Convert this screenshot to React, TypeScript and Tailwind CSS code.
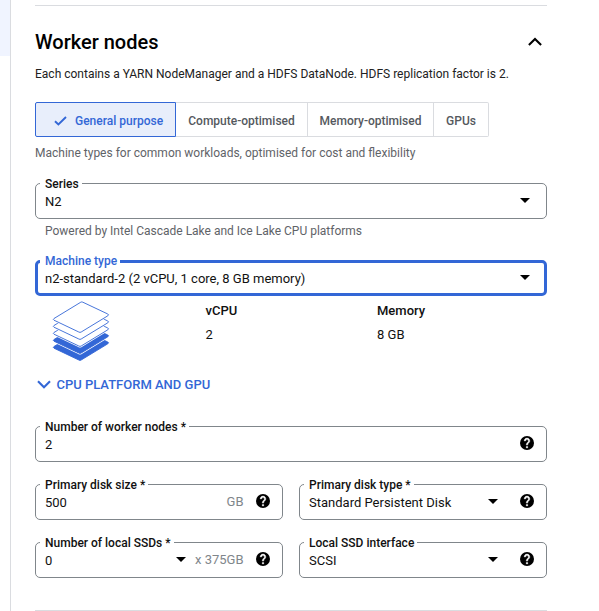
import type { ReactNode } from "react";

function HelpIcon() {
  return (
    <svg viewBox="2 2 20 20" className="mb-[2px] block h-[14px] w-[14px] shrink-0">
      <circle cx="12" cy="12" r="10" fill="#000" />
      <path
        d="M13 19h-2v-2h2v2zm2.07-7.75l-.9.92C13.45 12.9 13 13.5 13 15h-2v-.5c0-1.1.45-2.1 1.17-2.83l1.24-1.26c.37-.36.59-.86.59-1.41 0-1.1-.9-2-2-2s-2 .9-2 2H8c0-2.21 1.79-4 4-4s4 1.79 4 4c0 .88-.36 1.68-.93 2.25z"
        fill="#fff"
        stroke="#fff"
        strokeWidth="0.6"
      />
    </svg>
  );
}

function Caret() {
  return (
    <svg viewBox="0 0 10 5" className="mb-px block h-[5px] w-[10px] shrink-0" fill="#000">
      <path d="M0 0h10L5 5z" />
    </svg>
  );
}

function Field({
  label,
  value,
  focused = false,
  children,
}: {
  label: string;
  value: string;
  focused?: boolean;
  children?: ReactNode;
}) {
  return (
    <div
      className={
        "relative flex h-9 w-full items-center rounded-[5px] " +
        (focused ? "border-[3px] border-[#3367d6] pr-[13px] pl-[7px]" : "border border-[#80868b] pr-[12px] pl-[9px]")
      }
    >
      <span
        className={
          "absolute bg-white pr-[3px] pl-[5px] text-[12px] leading-4 font-medium whitespace-nowrap " +
          (focused ? "-top-[10px] left-[2px] text-[#3367d6]" : "-top-[8px] left-[4px] text-[#111]")
        }
      >
        {label}
      </span>
      <span className="flex-1 pt-[2px] text-[13px] leading-4 text-[#111]">{value}</span>
      {children}
    </div>
  );
}

const layer = "M30.8 1.8Q31.8 1.2 32.8 1.8L57.8 13.6Q59.3 14.4 57.8 15.4L31.2 31.6Q30 32.4 28.8 31.6L4 19.8Q2.6 19 4 18.1Z";

function StackIcon() {
  return (
    <svg viewBox="0 -0.4 62 62" className="block h-[62px] w-[62px]">
      {[28, 21, 14, 7, 0].map((y) => (
        <g key={y} transform={`translate(0 ${y})`}>
          <path d={layer} fill="#fff" stroke="#fff" strokeWidth="2.2" />
          <path d={layer} fill={y >= 21 ? "#3367d6" : "#fff"} stroke="#3367d6" strokeWidth="0.9" />
        </g>
      ))}
    </svg>
  );
}

export default function App() {
  return (
    <div className="flex h-[611px] w-[599px] overflow-hidden bg-white font-['Roboto',sans-serif] text-[#111]">
      <div className="w-[11px] shrink-0 border-r border-[#dadce0]">
        <div className="h-14 bg-[#f0f4ff]" />
      </div>
      <main className="ml-6 flex w-[512px] shrink-0 flex-col pt-[5px]">
        <div className="h-px shrink-0 bg-[#dadce0]" />
        <header className="mt-6 flex h-6 items-center justify-between pr-1">
          <h2 className="text-[20px] leading-6 font-medium text-black">Worker nodes</h2>
          <svg viewBox="0 0 15 9" className="mb-[2px] h-[9px] w-[15px]" fill="none" stroke="#000" strokeWidth="2.1">
            <path d="M0.9 7.9L7 1.9l6.1 6" />
          </svg>
        </header>
        <p className="mt-3 text-[12px] leading-4 whitespace-nowrap text-[#212121]">
          Each contains a YARN NodeManager and a HDFS DataNode. HDFS replication factor is 2.
        </p>
        <div className="mt-5 flex h-[35px] shrink-0 text-[12px] font-medium text-[#55595e]">
          <div className="flex w-[141px] items-center rounded-l-[2px] border border-[#3367d6] bg-[#e8eefb] pt-[2px] pl-[18px] text-[#3367d6]">
            <svg viewBox="0 0 13 10" className="mr-[8px] h-[10px] w-[13px]" fill="none" stroke="#3367d6" strokeWidth="1.9">
              <path d="M1 5.2l3.4 3.3L12 1" />
            </svg>
            General purpose
          </div>
          <div className="flex w-[132px] items-center justify-center border-y border-r border-[#dadce0] pt-[2px]">Compute-optimised</div>
          <div className="flex w-[126px] items-center justify-center border-y border-r border-[#dadce0] pt-[2px]">Memory-optimised</div>
          <div className="flex w-[55px] items-center justify-center rounded-r-[2px] border-y border-r border-[#dadce0] pt-[2px]">GPUs</div>
        </div>
        <p className="mt-2 text-[12px] leading-4 text-[#5f6368]">Machine types for common workloads, optimised for cost and flexibility</p>
        <div className="mt-[22px]">
          <Field label="Series" value="N2">
            <div className="mr-[4px]"><Caret /></div>
          </Field>
        </div>
        <p className="mt-1 pl-[10px] text-[12px] leading-4 text-[#5f6368]">Powered by Intel Cascade Lake and Ice Lake CPU platforms</p>
        <div className="mt-[21px]">
          <Field label="Machine type" value="n2-standard-2 (2 vCPU, 1 core, 8 GB memory)" focused>
            <div className="mr-px"><Caret /></div>
          </Field>
        </div>
        <div className="mt-[4px] flex h-[62px] shrink-0 pl-[15px] text-[13px] leading-4">
          <StackIcon />
          <dl className="ml-[93.5px] w-[171.5px] pt-[3px]">
            <dt className="font-medium">vCPU</dt>
            <dd className="mt-2">2</dd>
          </dl>
          <dl className="pt-[3px]">
            <dt className="font-medium">Memory</dt>
            <dd className="mt-2">8 GB</dd>
          </dl>
        </div>
        <div className="mt-[15px] flex h-4 items-center pl-[2px] text-[13px] font-medium text-[#3367d6]">
          <svg viewBox="0 0 14 9" className="mr-[5.4px] mb-[2px] h-[9px] w-[14px]" fill="none" stroke="#3367d6" strokeWidth="2.1">
            <path d="M1 1.2l6 6 6-6" />
          </svg>
          CPU PLATFORM AND GPU
        </div>
        <div className="mt-[33px] grid grid-cols-2 gap-x-4 gap-y-[22px]">
          <div className="col-span-2">
            <Field label="Number of worker nodes *" value="2"><HelpIcon /></Field>
          </div>
          <Field label="Primary disk size *" value="500">
            <span className="mr-[12.5px] text-[13px] text-[#80868b]">GB</span>
            <HelpIcon />
          </Field>
          <Field label="Primary disk type *" value="Standard Persistent Disk">
            <div className="mr-[22px]"><Caret /></div>
            <HelpIcon />
          </Field>
          <Field label="Number of local SSDs *" value="0">
            <Caret />
            <span className="mr-[12.5px] ml-[8.5px] text-[13px] text-[#80868b]">x 375GB</span>
            <HelpIcon />
          </Field>
          <Field label="Local SSD interface" value="SCSI">
            <div className="mr-[22px]"><Caret /></div>
            <HelpIcon />
          </Field>
        </div>
        <div className="mt-8 h-px shrink-0 bg-[#dadce0]" />
      </main>
    </div>
  );
}
